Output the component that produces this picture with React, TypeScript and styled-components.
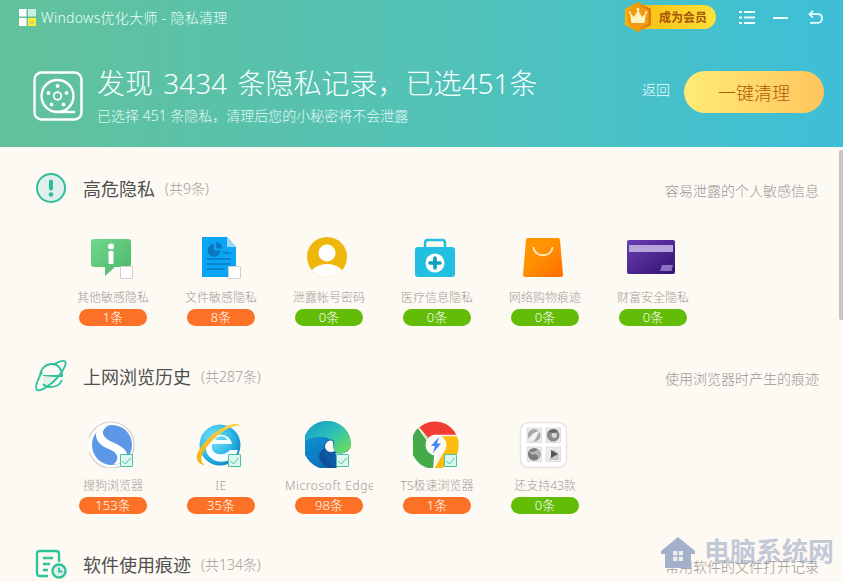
import React from 'react';
import styled, { createGlobalStyle } from 'styled-components';

const GlobalStyle = createGlobalStyle`
  html, body {
    margin: 0;
    padding: 0;
    height: 100%;
    overflow: hidden;
    background: #fdf9f3;
    font-family: "Noto Sans", "Noto Sans CJK SC", sans-serif;
  }
`;

function Logo() {
    return (
        <svg width="17" height="17" viewBox="0 0 17 17">
            <rect x="0" y="0" width="7.5" height="7.5" fill="#fff" />
            <rect x="9" y="0" width="8" height="7.5" fill="#c9f0e4" />
            <rect x="0" y="9" width="7.5" height="8" fill="#fff" />
            <rect x="9" y="9" width="8" height="8" fill="#ffe93b" />
            <rect x="11" y="12" width="4" height="3" fill="#d8d35a" />
        </svg>
    );
}

function Crown() {
    return (
        <svg width="28" height="30" viewBox="0 0 28 30">
            <defs>
                <linearGradient id="hexFill" x1="0" y1="0" x2="1" y2="0">
                    <stop offset="0" stopColor="#ffb400" />
                    <stop offset="1" stopColor="#d9780a" />
                </linearGradient>
            </defs>
            <polygon points="14,0 27,7 27,23 14,30 1,23 1,7" fill="url(#hexFill)" />
            <polygon points="14,3 24.5,8.5 24.5,21.5 14,27 3.5,21.5 3.5,8.5" fill="#f09a10" />
            <path d="M6 11 L10 15 L14 8 L18 15 L22 11 L20.5 21 H7.5 Z" fill="#fff3c4" />
            <circle cx="14" cy="7.5" r="1.4" fill="#fff3c4" />
            <circle cx="5.8" cy="10.5" r="1.2" fill="#fff3c4" />
            <circle cx="22.2" cy="10.5" r="1.2" fill="#fff3c4" />
        </svg>
    );
}

function MenuGlyph() {
    return (
        <svg width="16" height="13" viewBox="0 0 16 13" fill="#eafcff">
            <rect x="0" y="0" width="3" height="2" />
            <rect x="5" y="0" width="11" height="2" />
            <rect x="0" y="5.5" width="3" height="2" />
            <rect x="5" y="5.5" width="11" height="2" />
            <rect x="0" y="11" width="3" height="2" />
            <rect x="5" y="11" width="11" height="2" />
        </svg>
    );
}

function MinusGlyph() {
    return (
        <svg width="15" height="13" viewBox="0 0 15 13">
            <rect x="0" y="6" width="15" height="2" fill="#eafcff" />
        </svg>
    );
}

function BackGlyph() {
    return (
        <svg width="15" height="14" viewBox="0 0 15 14" fill="none" stroke="#eafcff" strokeWidth="1.8">
            <path d="M5 0.8 L1.5 4.2 L5 7.6" />
            <path d="M1.8 4.2 H10 C13 4.2 14 6.2 14 8.2 C14 10.8 12.4 12.8 10 12.8 H2" />
        </svg>
    );
}

function ReelIcon() {
    return (
        <svg width="50" height="50" viewBox="0 0 50 50" fill="none" stroke="#fff" strokeWidth="2.4">
            <rect x="1.5" y="1.5" width="47" height="47" rx="7" />
            <circle cx="24.5" cy="25" r="16" />
            <path d="M24.5 41 H42" />
            <circle cx="24.5" cy="25" r="3.8" strokeWidth="1.8" />
            <g fill="#fff" stroke="none">
                <circle cx="24.5" cy="15" r="1.9" />
                <circle cx="15.5" cy="22" r="1.9" />
                <circle cx="33.5" cy="22" r="1.9" />
                <circle cx="18.5" cy="33.5" r="1.9" />
                <circle cx="30.5" cy="33.5" r="1.9" />
            </g>
        </svg>
    );
}

function AlertIcon() {
    return (
        <svg width="30" height="30" viewBox="0 0 30 30">
            <circle cx="15" cy="15" r="14" fill="#dff0ea" stroke="#2dbd9a" strokeWidth="2" />
            <rect x="13" y="6.5" width="4" height="11" rx="2" fill="#2dbd9a" />
            <circle cx="15" cy="21.5" r="2.3" fill="#2dbd9a" />
        </svg>
    );
}

function PlanetIcon() {
    return (
        <svg width="32" height="32" viewBox="0 0 32 32" fill="none" stroke="#2fc39b" strokeWidth="1.9">
            <path d="M5 15 C6 8 11 4 17 4 C23 4 27 9 27 16 H8 M27 20 C25 25 20 27 15 27 C12 27 10 26 8 24" />
            <path d="M8 16 C7 20 9 23 12 25 L20 17 Z" fill="#e3f1ec" stroke="none" />
            <path d="M7 12 C2 21 0 28 2 30 C5 32 16 25 23 17 C29 10 32 3 30 1.5 C28 0 23 2 18 5" />
        </svg>
    );
}

function ClockListIcon() {
    return (
        <svg width="32" height="30" viewBox="0 0 32 30" fill="none" stroke="#2fc39b" strokeWidth="2.4">
            <path d="M13 27 H5 C3 27 2 26 2 24 V5 C2 3 3 2 5 2 H21 C23 2 24 3 24 5 V13" />
            <path d="M8 9 H18 M8 15 H15 M8 21 H13" />
            <circle cx="24" cy="22" r="6.5" fill="#dff0ea" />
            <path d="M24 18.5 V22.5 H27.5" strokeWidth="1.8" />
        </svg>
    );
}

function BubbleIcon() {
    return (
        <svg width="48" height="48" viewBox="0 0 48 48">
            <defs>
                <linearGradient id="bubbleFill" x1="0" y1="0" x2="1" y2="1">
                    <stop offset="0" stopColor="#71d98d" />
                    <stop offset="1" stopColor="#4db569" />
                </linearGradient>
            </defs>
            <path d="M5 7 H39 A3 3 0 0 1 42 10 V32 A3 3 0 0 1 39 35 H26 L16 44 V35 H5 A3 3 0 0 1 2 32 V10 A3 3 0 0 1 5 7 Z" fill="url(#bubbleFill)" />
            <circle cx="22" cy="14.5" r="3" fill="#fff" />
            <rect x="19.5" y="19" width="5" height="13" rx="1" fill="#fff" />
        </svg>
    );
}

function FileIcon() {
    return (
        <svg width="48" height="48" viewBox="0 0 48 48">
            <path d="M5 5 H30 L39 15 V45 H5 Z" fill="#0aa6f5" />
            <path d="M30 5 L39 15 H30 Z" fill="#96d9fb" />
            <path d="M17 12 A6.5 6.5 0 1 0 23.5 18.5 H17 Z" fill="#0b78c0" />
            <path d="M19 10 A6.5 6.5 0 0 1 25.5 16.5 H19 Z" fill="#0b78c0" />
            <path d="M26 21 H34 M10 27 H34 M10 32 H34 M10 37 H28" stroke="#0b78c0" strokeWidth="1.4" />
        </svg>
    );
}

function UserIcon() {
    return (
        <svg width="48" height="48" viewBox="0 0 48 48">
            <defs>
                <clipPath id="userClip">
                    <circle cx="22" cy="25" r="20" />
                </clipPath>
            </defs>
            <circle cx="22" cy="25" r="20" fill="#eeb70a" />
            <circle cx="22" cy="21" r="8.5" fill="#fff" />
            <ellipse cx="22" cy="44" rx="17" ry="12" fill="#fff" clipPath="url(#userClip)" />
        </svg>
    );
}

function MedicalIcon() {
    return (
        <svg width="48" height="48" viewBox="0 0 48 48">
            <path d="M12 16 V11 Q12 8 15 8 H29 Q32 8 32 11 V16" fill="none" stroke="#22bfe0" strokeWidth="2.5" />
            <rect x="2" y="15" width="40" height="30" rx="3" fill="#22bfe0" />
            <circle cx="22" cy="31" r="9.5" fill="#fff" />
            <path d="M22 26 V36 M17 31 H27" stroke="#0c9fc2" strokeWidth="3.6" strokeLinecap="round" />
        </svg>
    );
}

function BagIcon() {
    return (
        <svg width="48" height="48" viewBox="0 0 48 48">
            <defs>
                <linearGradient id="bagFill" x1="0" y1="0" x2="1" y2="1">
                    <stop offset="0.4" stopColor="#ff9300" />
                    <stop offset="1" stopColor="#ff6a00" />
                </linearGradient>
            </defs>
            <path d="M7 6 H37 Q39 6 39 8 L42 43 Q42 45 40 45 H4 Q2 45 2 43 L5 8 Q5 6 7 6 Z" fill="url(#bagFill)" />
            <path d="M12.5 15 C13 26 31 26 31.5 15" fill="none" stroke="#ffe9c2" strokeWidth="1.8" />
        </svg>
    );
}

function CardIcon() {
    return (
        <svg width="48" height="48" viewBox="0 0 48 48" overflow="visible">
            <defs>
                <linearGradient id="cardFill" x1="0" y1="0" x2="1" y2="1">
                    <stop offset="0" stopColor="#6b3db5" />
                    <stop offset="1" stopColor="#33146f" />
                </linearGradient>
            </defs>
            <rect x="-2" y="8" width="48" height="34" rx="2" fill="url(#cardFill)" />
            <rect x="0" y="13" width="44" height="7" fill="#b8a4dd" />
            <polygon points="33,33 44,33 42.5,39 31,39" fill="#8a70bf" />
        </svg>
    );
}

function SogouIcon() {
    return (
        <svg width="48" height="48" viewBox="0 0 48 48">
            <circle cx="22" cy="25" r="23" fill="#fff" stroke="#d4d0cd" strokeWidth="1.2" />
            <circle cx="23" cy="25" r="20" fill="#5d98e6" />
            <path d="M7 16 C6 10 13 6 19 6 C11 10 13 17 21 21 C30 25 39 29 38 36 C37 42 28 45 24 44.5 C31 40 29 33 22 30 C14 27 8 23 7 16 Z" fill="#fff" />
        </svg>
    );
}

function IeIcon() {
    return (
        <svg width="48" height="48" viewBox="0 0 48 48" overflow="visible">
            <defs>
                <radialGradient id="ieFill" cx="0.35" cy="0.35" r="0.8">
                    <stop offset="0" stopColor="#7fe4fb" />
                    <stop offset="0.6" stopColor="#26b4e6" />
                    <stop offset="1" stopColor="#0b70b8" />
                </radialGradient>
                <linearGradient id="ieRing" x1="0" y1="0" x2="1" y2="0">
                    <stop offset="0" stopColor="#f2b51c" />
                    <stop offset="1" stopColor="#ffd84a" />
                </linearGradient>
            </defs>
            <circle cx="23" cy="25" r="20.5" fill="url(#ieFill)" />
            <path d="M13 22 C15 12 33 12 35 24 H15 V28 C16 35 27 37 33 30 H41 C37 44 16 46 10 33 C8 29 9 25 13 22 Z M18 20 H30 C28 15 20 15 18 20 Z" fill="#f4fdff" fillRule="evenodd" />
            <path d="M44 6 C36 -1 14 12 2 30 C-3 38 1 45 8 45 C3 43 3 36 9 28 C18 16 33 4 44 6 Z" fill="url(#ieRing)" />
        </svg>
    );
}

function EdgeIcon() {
    return (
        <svg width="48" height="48" viewBox="0 0 48 48">
            <defs>
                <linearGradient id="edgeTop" x1="0" y1="0" x2="1" y2="0.8">
                    <stop offset="0" stopColor="#1496c8" />
                    <stop offset="0.55" stopColor="#2cc0b9" />
                    <stop offset="1" stopColor="#6bdc5d" />
                </linearGradient>
                <linearGradient id="edgeLow" x1="0" y1="0" x2="0.8" y2="1">
                    <stop offset="0" stopColor="#10a0dc" />
                    <stop offset="1" stopColor="#0b62b4" />
                </linearGradient>
            </defs>
            <circle cx="22" cy="25" r="24" fill="url(#edgeLow)" />
            <path d="M30 33 C38 35 45 32 46 25 L50 25 V50 H33 C36 47 33 40 30 33 Z" fill="#fdf9f3" />
            <path d="M-1 21 C1 8 12 1 22 1 C36 1 46 12 46 25 C45 31 38 34 33 33 C29 32 27 30 28 27 C29 22 24 17 18 17 C10 17 2 19 -1 21 Z" fill="url(#edgeTop)" />
            <path d="M19 29 C19 38 25 46 33 47 C27 50 18 48 15 40 C13 35 15 31 19 29 Z" fill="#0d4f98" />
            <path d="M19 29 C19 23 24 18 28 20 C30 22 27 27 30 31 C32 34 28 39 33 47 C25 46 19 38 19 29 Z" fill="#0d5aa6" />
            <path d="M20 27 C20 22 25 19.5 27.5 21 C29 23 27 28 30 31 C26 33 21 32 20 27 Z" fill="#fdf9f3" />
        </svg>
    );
}

function TsIcon() {
    return (
        <svg width="48" height="48" viewBox="0 0 48 48">
            <path d="M22 25 L6 7.5 A24 24 0 0 1 44 16 L22 16 Z" fill="#f23c34" />
            <path d="M22 25 L5 8 A24 24 0 0 0 20 49 Z" fill="#44aa4a" />
            <path d="M23 16 H44 A24 24 0 0 1 21 49 L32 30 Z" fill="#fdbd10" />
            <path d="M5.5 7.5 L15 21 M44 15.5 H25 M20.5 49 L30 31" stroke="#fdf9f3" strokeWidth="1.4" />
            <circle cx="23" cy="25" r="10.5" fill="#fdf9f3" />
            <polygon points="26,17 18,26 22,26 20,33 28,23.5 24,23.5" fill="#3f86f2" />
        </svg>
    );
}

function MoreIcon() {
    return (
        <svg width="48" height="48" viewBox="0 0 48 48" overflow="visible">
            <rect x="-0.5" y="2.5" width="46" height="45" rx="8" fill="#fff" stroke="#e6e3e0" strokeWidth="1.4" />
            <g stroke="#cfcfcf" strokeWidth="0.6" fill="#ececec">
                <rect x="6" y="8" width="14.5" height="14.5" />
                <rect x="25" y="8" width="14.5" height="14.5" />
                <rect x="6" y="27" width="14.5" height="14.5" />
                <rect x="25" y="27" width="14.5" height="14.5" />
            </g>
            <circle cx="13.2" cy="15.2" r="6.3" fill="#a8a8a8" />
            <path d="M8 19 C10 14 15 11 19 11 C16 14 16 18 13 21 C11 21.5 9 20.5 8 19 Z" fill="#f0f0f0" />
            <circle cx="32.2" cy="15.2" r="6.3" fill="#8a8a8a" />
            <circle cx="33.2" cy="15.2" r="2.6" fill="#d8d8d8" />
            <path d="M27 12 C29 9 34 8 37 11 L33 13 Z" fill="#666" />
            <circle cx="13.2" cy="34.2" r="6.3" fill="#7d7d7d" />
            <path d="M8 31 C11 33 14 32 17 29 C20 33 19 38 16 40 C19 35 15 33 11 35 Z" fill="#b5b5b5" />
            <path d="M28 40 L32 29 L38 34 V40 Z" fill="#c8c8c8" />
            <polygon points="30,30 30,38 37,34" fill="#555" />
        </svg>
    );
}

function WatermarkHouse() {
    return (
        <svg width="36" height="36" viewBox="0 0 36 36">
            <path d="M18 1 L35 15 V18 H31 V32 H5 V18 H1 V15 Z" fill="#a3b0ca" />
            <rect x="13" y="15" width="10" height="10" fill="#fdf9f3" opacity="0.85" />
            <path d="M18 15 V25 M13 20 H23" stroke="#a3b0ca" strokeWidth="1.4" />
        </svg>
    );
}

const sections = [
    {
        icon: <AlertIcon />,
        title: '高危隐私',
        count: '(共9条)',
        desc: '容易泄露的个人敏感信息',
        checked: false,
        items: [
            { icon: <BubbleIcon />, label: '其他敏感隐私', num: 1, box: true },
            { icon: <FileIcon />, label: '文件敏感隐私', num: 8, box: true },
            { icon: <UserIcon />, label: '泄露帐号密码', num: 0 },
            { icon: <MedicalIcon />, label: '医疗信息隐私', num: 0 },
            { icon: <BagIcon />, label: '网络购物痕迹', num: 0 },
            { icon: <CardIcon />, label: '财富安全隐私', num: 0 },
        ],
    },
    {
        icon: <PlanetIcon />,
        title: '上网浏览历史',
        count: '(共287条)',
        desc: '使用浏览器时产生的痕迹',
        checked: true,
        items: [
            { icon: <SogouIcon />, label: '搜狗浏览器', num: 153, box: true },
            { icon: <IeIcon />, label: 'IE', num: 35, box: true, wide: true },
            { icon: <EdgeIcon />, label: 'Microsoft Edge', num: 98, box: true, wide: true },
            { icon: <TsIcon />, label: 'TS极速浏览器', num: 1, box: true },
            { icon: <MoreIcon />, label: '还支持43款', num: 0 },
        ],
    },
    {
        icon: <ClockListIcon />,
        title: '软件使用痕迹',
        count: '(共134条)',
        desc: '常用软件的文件打开记录',
        checked: false,
        items: [],
    },
];

export default function App() {
    return (
        <Page>
            <GlobalStyle />
            <Header>
                <TopBar>
                    <Logo />
                    <AppTitle>Windows优化大师 - 隐私清理</AppTitle>
                    <TopActions>
                        <Member>
                            <CrownSlot><Crown /></CrownSlot>
                            成为会员
                        </Member>
                        <WindowButtons>
                            <MenuGlyph />
                            <MinusGlyph />
                            <BackGlyph />
                        </WindowButtons>
                    </TopActions>
                </TopBar>
                <Summary>
                    <ReelIcon />
                    <SummaryText>
                        <Headline>发现 3434 条隐私记录，已选451条</Headline>
                        <SubLine>已选择 451 条隐私，清理后您的小秘密将不会泄露</SubLine>
                    </SummaryText>
                    <BackLink>返回</BackLink>
                    <CleanButton>一键清理</CleanButton>
                </Summary>
            </Header>
            <Content>
                {sections.map((section) => (
                    <Section key={section.title}>
                        <SectionHead>
                            <SectionIcon>{section.icon}</SectionIcon>
                            <SectionTitle>{section.title}</SectionTitle>
                            <SectionCount>{section.count}</SectionCount>
                            <SectionDesc>{section.desc}</SectionDesc>
                        </SectionHead>
                        <ItemRow>
                            {section.items.map((item) => (
                                <Item key={item.label}>
                                    <ItemIcon>
                                        {item.icon}
                                        {item.box && (
                                            <CheckBox $checked={section.checked}>
                                                {section.checked && (
                                                    <svg width="9" height="8" viewBox="0 0 9 8" fill="none" stroke="#45c4a0" strokeWidth="1">
                                                        <path d="M0.5 4 L3.5 7 L8.5 1" />
                                                    </svg>
                                                )}
                                            </CheckBox>
                                        )}
                                    </ItemIcon>
                                    <ItemLabel $wide={!!item.wide}>{item.label}</ItemLabel>
                                    <CountPill $hot={item.num > 0}>{item.num}条</CountPill>
                                </Item>
                            ))}
                        </ItemRow>
                    </Section>
                ))}
                <ScrollThumb />
            </Content>
            <Watermark>
                <WatermarkHouse />
                <WatermarkText>电脑系统网</WatermarkText>
            </Watermark>
        </Page>
    );
}

const Page = styled.div`
    position: relative;
    display: flex;
    flex-direction: column;
    width: 843px;
    height: 582px;
    overflow: hidden;
    background: #fdf9f3;
`;

const Header = styled.header`
    flex: none;
    height: 147px;
    box-sizing: border-box;
    background: linear-gradient(90deg, #62c19b 0%, #53c2b6 50%, #3dbfd8 100%);
    color: #fff;
`;

const TopBar = styled.div`
    display: flex;
    align-items: center;
    height: 34px;
    padding: 0 20px 0 19px;
`;

const AppTitle = styled.span`
    margin-left: 5px;
    font-size: 14px;
    letter-spacing: 0.3px;
    font-weight: 300;
    color: #eafffa;
`;

const TopActions = styled.div`
    display: flex;
    align-items: center;
    margin-left: auto;
`;

const Member = styled.div`
    position: relative;
    display: flex;
    align-items: center;
    justify-content: flex-end;
    box-sizing: border-box;
    width: 89px;
    height: 24px;
    padding-right: 9px;
    border-radius: 12px;
    background: linear-gradient(90deg, #f9b90c, #ffe13a);
    color: #a6560a;
    font-size: 12px;
    font-weight: 700;
`;

const CrownSlot = styled.span`
    position: absolute;
    left: -3px;
    top: -3px;
    display: flex;
`;

const WindowButtons = styled.div`
    display: flex;
    align-items: center;
    gap: 18px;
    margin-left: 23px;
    svg:last-child {
        margin-left: 2px;
    }
`;

const Summary = styled.div`
    display: flex;
    align-items: center;
    padding: 32px 19px 0 33px;
`;

const SummaryText = styled.div`
    display: flex;
    flex-direction: column;
    margin-left: 14px;
`;

const Headline = styled.h1`
    margin: 0;
    font-size: 28px;
    line-height: 34px;
    word-spacing: 3px;
    font-weight: 300;
    color: #f6fffd;
`;

const SubLine = styled.p`
    margin: 6px 0 0;
    font-size: 14px;
    line-height: 20px;
    font-weight: 300;
    color: #e4faf6;
`;

const BackLink = styled.span`
    margin: 0 0 14px auto;
    font-size: 14px;
    font-weight: 300;
    color: #effffd;
`;

const CleanButton = styled.button`
    width: 140px;
    height: 42px;
    margin: 0 0 8px 14px;
    border: none;
    border-radius: 21px;
    background: linear-gradient(90deg, #ffec74, #ffc55e);
    color: #b0590a;
    font-family: inherit;
    font-size: 18px;
    font-weight: 300;
`;

const Content = styled.main`
    position: relative;
    flex: 1;
    padding: 26px 24px 0 35px;
`;

const Section = styled.section`
    height: 188px;
`;

const SectionHead = styled.div`
    display: flex;
    align-items: center;
    height: 30px;
`;

const SectionIcon = styled.span`
    display: flex;
    justify-content: center;
    width: 32px;
    margin-right: 16px;
`;

const SectionTitle = styled.h2`
    margin: 0;
    font-size: 18px;
    font-weight: 400;
    color: #505050;
`;

const SectionCount = styled.span`
    margin-left: 10px;
    font-size: 14px;
    font-weight: 300;
    color: #a29f9c;
`;

const SectionDesc = styled.span`
    margin: 4px 0 0 auto;
    font-size: 14px;
    font-weight: 300;
    color: #9b9895;
`;

const ItemRow = styled.div`
    display: flex;
    margin: 29px 0 0 24px;
`;

const Item = styled.div`
    display: flex;
    flex-direction: column;
    align-items: center;
    width: 108px;
`;

const ItemIcon = styled.div`
    position: relative;
    width: 48px;
    height: 48px;
`;

const CheckBox = styled.span<{ $checked: boolean }>`
    position: absolute;
    left: 31px;
    top: 34px;
    display: flex;
    align-items: center;
    justify-content: center;
    box-sizing: border-box;
    width: 13px;
    height: 13px;
    border: 1px solid ${(p) => (p.$checked ? '#45c4a0' : '#d3d0cc')};
    border-radius: 1px;
    background: ${(p) => (p.$checked ? '#dff5ef' : '#fff')};
`;

const ItemLabel = styled.div<{ $wide: boolean }>`
    width: 88px;
    height: 18px;
    margin-top: 9px;
    overflow: hidden;
    text-align: center;
    white-space: nowrap;
    font-size: 12px;
    letter-spacing: ${(p) => (p.$wide ? '0.6px' : '0')};
    line-height: 18px;
    font-weight: 300;
    color: #9f9c99;
`;

const CountPill = styled.div<{ $hot: boolean }>`
    width: 68px;
    height: 17px;
    margin-top: 2px;
    border-radius: 8.5px;
    background: ${(p) => (p.$hot ? '#fd7126' : '#63bd06')};
    text-align: center;
    font-size: 13px;
    line-height: 17px;
    font-weight: 300;
    color: #fff;
`;

const ScrollThumb = styled.div`
    position: absolute;
    top: 3px;
    right: 0;
    width: 4px;
    height: 170px;
    border-radius: 2px 0 0 2px;
    background: #c9c5c0;
`;

const Watermark = styled.div`
    position: absolute;
    left: 660px;
    top: 536px;
    display: flex;
    align-items: flex-start;
    gap: 8px;
    pointer-events: none;
`;

const WatermarkText = styled.span`
    font-size: 26px;
    line-height: 30px;
    font-weight: 700;
    color: rgba(142, 157, 189, 0.55);
`;
